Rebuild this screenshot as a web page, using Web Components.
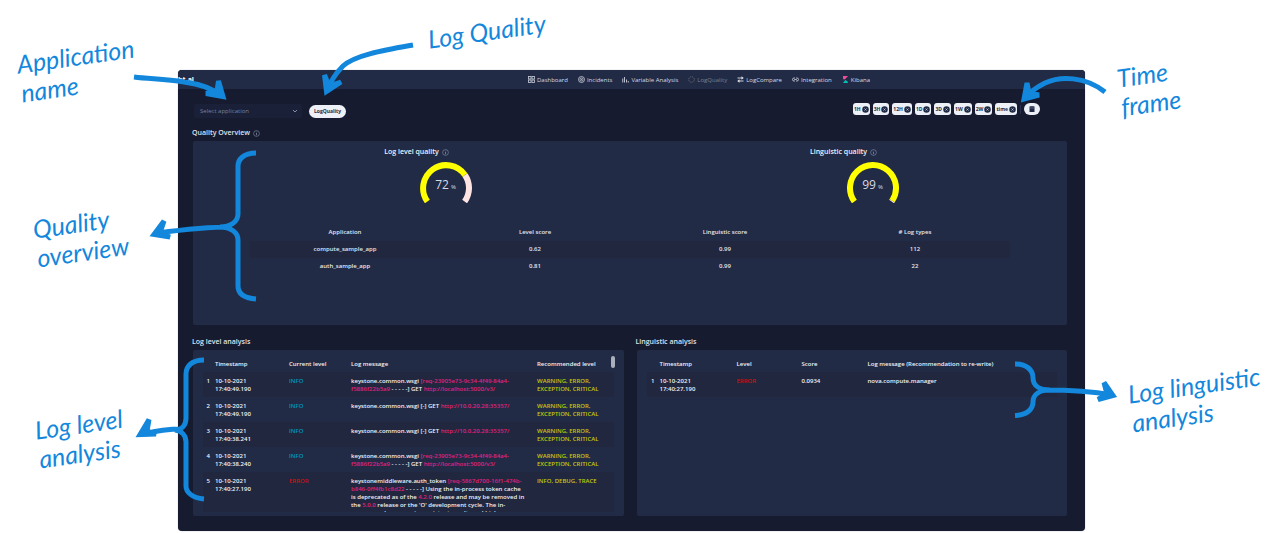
<!DOCTYPE html>
<html lang="en">
<head>
<meta charset="utf-8">
<title>Log quality guide</title>
<style>
  body { margin: 0; background: #fff; font-family: "Open Sans", "Noto Sans", sans-serif; }
</style>
</head>
<body>
<guide-stage></guide-stage>

<script>
const define = (name, html, setup) => {
  const tpl = document.createElement('template');
  tpl.innerHTML = html;
  customElements.define(name, class extends HTMLElement {
    constructor() {
      super();
      this.attachShadow({ mode: 'open' }).append(tpl.content.cloneNode(true));
    }
    connectedCallback() { if (setup) setup(this, this.shadowRoot); }
  });
};

const icons = {
  dashboard: '<g fill="none" stroke="#c9cfdd" stroke-width="1.6"><rect x="1" y="1" width="5" height="5"/><rect x="8" y="1" width="5" height="5"/><rect x="1" y="8" width="5" height="5"/><rect x="8" y="8" width="5" height="5"/></g>',
  incidents: '<g fill="none" stroke="#c9cfdd" stroke-width="1.6"><circle cx="7" cy="7" r="6"/><circle cx="7" cy="7" r="3"/></g><circle cx="7" cy="7" r="1" fill="#c9cfdd"/>',
  variable: '<path d="M1.5 13V5M5 13V2M9 13V7M12.5 13V10" stroke="#c9cfdd" stroke-width="1.8" fill="none"/>',
  quality: '<circle cx="7" cy="7" r="5.6" fill="none" stroke="#6d7280" stroke-width="1.6" stroke-dasharray="2.6 1.8"/>',
  compare: '<path d="M1 4h9M4 10h9" stroke="#e4e7ef" stroke-width="1.8"/><path d="M9 0.5 13.5 4 9 7.5zM5 6.5 0.5 10 5 13.5z" fill="#e4e7ef"/>',
  integration: '<path d="M6 4H4a3 3 0 0 0 0 6h2M8 4h2a3 3 0 0 1 0 6H8M4.500 7h5" fill="none" stroke="#c9cfdd" stroke-width="1.7"/>',
  kibana: '<path d="M2 0h10L2 11z" fill="#f04e98"/><path d="M2 6q4 0 6 3l-6 5z" fill="#2b3350"/><path d="M7 8q5 2 5 6H2z" fill="#00bfb3"/>'
};

define('info-icon', `
  <style>:host { display: inline-block; line-height: 0; } svg { width: 7px; height: 7px; display: block; }</style>
  <svg viewBox="0 0 14 14" aria-hidden="true"><circle cx="7" cy="7" r="5.800" fill="none" stroke="#8f9bb3" stroke-width="1.100"/><path d="M7 6v4.500M7 3.500v1.200" stroke="#8f9bb3" stroke-width="1.400"/></svg>`);

define('nav-link', `
  <style>
    :host { display: block; }
    a { display: flex; align-items: center; gap: 2px; color: #d5dae6; text-decoration: none; font-size: 6px; line-height: 8px; font-weight: 400; white-space: nowrap; }
    :host([active]) a { color: #7b808d; }
    svg { width: 7px; height: 7px; }
  </style>
  <a href="#"><svg viewBox="0 0 14 14" aria-hidden="true"></svg><slot></slot></a>`,
  (el, root) => { root.querySelector('svg').innerHTML = icons[el.getAttribute('icon')]; });

define('top-bar', `
  <style>
    :host { display: flex; justify-content: space-between; align-items: center; height: 19px; background: #222b45; padding-right: 215px; }
    b { color: #fff; font-size: 7px; line-height: 10px; }
    nav { display: flex; gap: 10px; }
  </style>
  <b>ht.ai</b>
  <nav>
    <nav-link icon="dashboard">Dashboard</nav-link>
    <nav-link icon="incidents">Incidents</nav-link>
    <nav-link icon="variable">Variable Analysis</nav-link>
    <nav-link icon="quality" active>LogQuality</nav-link>
    <nav-link icon="compare">LogCompare</nav-link>
    <nav-link icon="integration">Integration</nav-link>
    <nav-link icon="kibana">Kibana</nav-link>
  </nav>`);

define('range-chip', `
  <style>
    :host { display: block; }
    button { display: flex; align-items: center; gap: 1px; height: 12px; padding: 0 1px; border: 0; border-radius: 3px; background: #edf1f7; color: #222b45; font: 700 5px/8px "Open Sans", sans-serif; }
    svg { width: 7px; height: 7px; }
  </style>
  <button type="button"><slot></slot><svg viewBox="0 0 14 14" aria-hidden="true"><circle cx="7" cy="7" r="6.500" fill="#222b45"/><path d="M5 5l4 4M9 5l-4 4" stroke="#c5cbd8" stroke-width="1.600"/></svg></button>`);

define('tool-bar', `
  <style>
    :host { display: flex; align-items: flex-start; padding: 0 27px 0 2px; }
    .pick { position: relative; width: 108px; margin-right: 7px; }
    select { appearance: none; display: block; width: 100%; height: 14px; margin: 0; padding: 0 6px; border: 0; border-radius: 2px; background: #1a2038; color: #7682a0; font: 400 6px/14px "Open Sans", sans-serif; }
    .pick svg { position: absolute; right: 4px; top: 4px; width: 6px; height: 6px; }
    .main { height: 13px; margin-top: 1px; padding: 0 5px; border: 0; border-radius: 7px; background: #edf1f7; color: #222b45; font: 700 5px/13px "Open Sans", sans-serif; }
    .range { display: flex; gap: 3px; margin-left: auto; margin-top: -1px; align-items: center; }
    i { width: 1px; height: 9px; background: #2a3150; }
    .cal { display: grid; place-items: center; width: 16px; height: 12px; padding: 0; border: 0; border-radius: 6px; background: #edf1f7; }
    .cal svg { width: 6px; height: 6px; }
  </style>
  <div class="pick">
    <select aria-label="Application"><option>Select application</option></select>
    <svg viewBox="0 0 12 12" aria-hidden="true"><path d="M2 4l4 4 4-4" fill="none" stroke="#8f9bb3" stroke-width="1.800"/></svg>
  </div>
  <button class="main" type="button">LogQuality</button>
  <div class="range">
    <range-chip>1H</range-chip><range-chip>3H</range-chip><range-chip>12H</range-chip><range-chip>1D</range-chip><range-chip>3D</range-chip><range-chip>1W</range-chip><range-chip>2W</range-chip><range-chip>time</range-chip>
    <i></i>
    <button class="cal" type="button" aria-label="Pick dates"><svg viewBox="0 0 12 12"><path d="M3 0h2v1h2V0h2v1h2v11H1V1h2z" fill="#222b45"/><path d="M2 4h8" stroke="#8f9bb3"/></svg></button>
  </div>`);

define('panel-section', `
  <style>
    :host { display: flex; flex-direction: column; min-width: 0; }
    h2 { display: flex; align-items: center; gap: 3px; margin: 0; color: #dfe3ec; font-size: 7px; line-height: 10px; font-weight: 600; }
    .card { flex: 1; margin: 3px 0 0 1px; background: #222b45; border-radius: 2px; }
  </style>
  <h2><slot name="title"></slot></h2>
  <div class="card"><slot></slot></div>`);

define('score-gauge', `
  <style>
    :host { display: flex; flex-direction: column; align-items: center; }
    h3 { display: flex; align-items: center; gap: 3px; margin: 0; color: #f0f2f7; font-size: 7px; line-height: 10px; font-weight: 600; }
    .dial { position: relative; width: 54px; height: 42px; margin: 4px 0 0 58px; }
    svg { display: block; width: 54px; height: 42px; }
    p { position: absolute; inset: 17px 0 auto 0; margin: 0; text-align: center; color: #d5dae6; font-size: 12px; line-height: 14px; }
    small { font-size: 6px; margin-left: 2px; }
  </style>
  <h3><slot></slot><info-icon></info-icon></h3>
  <div class="dial">
    <svg viewBox="0 0 54 42" aria-hidden="true">
      <g fill="none" stroke-width="6"><path class="rest" stroke="#ffe4e4"/><path class="fill" stroke="#ff0"/></g>
    </svg>
    <p><span></span><small>%</small></p>
  </div>`,
  (el, root) => {
    const value = +el.getAttribute('value');
    const from = -216 * Math.PI / 180, sweep = 252 * Math.PI / 180;
    const pt = a => (27 + 23 * Math.cos(a)).toFixed(2) + ' ' + (27 + 23 * Math.sin(a)).toFixed(2);
    const arc = (a, b) => `M${pt(a)}A23 23 0 ${b - a > Math.PI ? 1 : 0} 1 ${pt(b)}`;
    const mid = from + sweep * value / 100;
    root.querySelector('.rest').setAttribute('d', arc(mid, from + sweep));
    root.querySelector('.fill').setAttribute('d', arc(from, mid));
    root.querySelector('span').textContent = value;
  });

define('app-scores', `
  <style>
    :host { display: block; }
    table { width: 100%; table-layout: fixed; border-collapse: collapse; text-align: center; color: #e4e7ef; font-size: 6px; line-height: 9px; font-weight: 600; }
    th, td { padding: 4px 0; font-weight: 600; }
    tbody tr:nth-child(odd) { background: #20273f; }
  </style>
  <table>
    <thead><tr><th>Application</th><th>Level score</th><th>Linguistic score</th><th># Log types</th></tr></thead>
    <tbody>
      <tr><td>compute_sample_app</td><td>0.62</td><td>0.99</td><td>112</td></tr>
      <tr><td>auth_sample_app</td><td>0.81</td><td>0.99</td><td>22</td></tr>
    </tbody>
  </table>`);

const logTableStyle = `
  <style>
    :host { display: block; position: relative; padding: 6px 10px 4px; }
    .view { max-height: 156px; overflow: hidden; }
    table { width: 100%; table-layout: fixed; border-collapse: collapse; color: #f0f2f7; font-size: 6px; line-height: 8px; font-weight: 600; text-align: left; }
    th { padding: 4px 0; font-weight: 600; }
    td { padding: 5px 0 4px; vertical-align: top; }
    td:first-child { text-align: right; padding-right: 5px; }
    tbody tr:nth-child(odd) { background: #20273f; }
    .info { color: #0095c8; } .error { color: #d40d12; } .rec { color: #c3c90a; }
    em { font-style: normal; color: #e0217c; }
    .thumb { position: absolute; top: 6px; right: 9px; width: 4px; height: 12px; border-radius: 2px; background: #a9afbd; }
  </style>`;
const req = 'keystone.common.wsgi <em>[req-23905e73-9c34-4f49-84a4-f5886f22b5a9</em> - - - - -] GET <em>http://localhost:5000/v3/</em>';
const get = 'keystone.common.wsgi [-] GET <em>http://10.0.20.28:35357/</em>';
const all = 'WARNING, ERROR,<br>EXCEPTION, CRITICAL';
const levelRows = [
  ['17:40:49.190', 'INFO', req, all],
  ['17:40:49.190', 'INFO', get, all],
  ['17:40:38.241', 'INFO', get, all],
  ['17:40:38.240', 'INFO', req, all],
  ['17:40:27.190', 'ERROR', "keystonemiddleware.auth_token <em>[req-5867d700-16f1-474b-b846-0ff4fb1c8d22</em> - - - - -] Using the in-process token cache is deprecated as of the <em>4.2.0</em> release and may be removed in the <em>5.0.0</em> release or the 'O' development cycle. The in-process cache causes inconsistent results and high", 'INFO, DEBUG, TRACE']
];
define('level-log', logTableStyle + `
  <div class="view"><table>
    <colgroup><col style="width:12px"><col style="width:74px"><col style="width:62px"><col style="width:186px"><col style="width:77px"></colgroup>
    <thead><tr><th></th><th>Timestamp</th><th>Current level</th><th>Log message</th><th>Recommended level</th></tr></thead>
    <tbody>${levelRows.map((r, i) => `<tr><td>${i + 1}</td><td>10-10-2021<br>${r[0]}</td><td class="${r[1].toLowerCase()}">${r[1]}</td><td style="padding-right:11px">${r[2]}</td><td class="rec">${r[3]}</td></tr>`).join('')}</tbody>
  </table></div>
  <div class="thumb"></div>`);

define('linguistic-log', logTableStyle + `
  <div class="view"><table>
    <colgroup><col style="width:13px"><col style="width:77px"><col style="width:65px"><col style="width:66px"><col style="width:190px"></colgroup>
    <thead><tr><th></th><th>Timestamp</th><th>Level</th><th>Score</th><th>Log message (Recommendation to re-write)</th></tr></thead>
    <tbody><tr><td>1</td><td>10-10-2021<br>17:40:27.190</td><td class="error">ERROR</td><td>0.0934</td><td>nova.compute.manager</td></tr></tbody>
  </table></div>`);

define('app-window', `
  <style>
    :host { display: block; background: #161b30; border-radius: 4px; overflow: hidden; box-shadow: 0 0 1px #777b90; }
    main { padding: 15px 18px 15px 14px; }
    .overview { margin-top: 10px; }
    .inner { padding: 6px 10px 50px; }
    .gauges { display: grid; grid-template-columns: 1fr 1fr; }
    app-scores { margin: 21px 47px 0; }
    .pair { display: grid; grid-template-columns: 1fr 1fr; gap: 12px; margin-top: 12px; }
  </style>
  <top-bar></top-bar>
  <main>
    <tool-bar></tool-bar>
    <panel-section class="overview">
      <span slot="title">Quality Overview</span><info-icon slot="title"></info-icon>
      <div class="inner">
        <div class="gauges">
          <score-gauge value="72">Log level quality</score-gauge>
          <score-gauge value="99">Linguistic quality</score-gauge>
        </div>
        <app-scores></app-scores>
      </div>
    </panel-section>
    <div class="pair">
      <panel-section><span slot="title">Log level analysis</span><level-log></level-log></panel-section>
      <panel-section><span slot="title">Linguistic analysis</span><linguistic-log></linguistic-log></panel-section>
    </div>
  </main>`);

/* Handwritten-style note laid over the free margin of the stage. */
define('margin-note', `
  <style>
    :host { position: absolute; color: #1387dc; font: italic 400 25px/29px Lato, sans-serif; white-space: nowrap; transform: rotate(-8deg); transform-origin: 0 0; }
  </style><slot></slot>`);

define('guide-stage', `
  <style>
    :host { display: block; position: relative; padding: 70px 200px 1px 178px; overflow: hidden; }
    svg { position: absolute; top: 0; width: 560px; height: 533px; fill: none; stroke: #1387dc; stroke-width: 5; pointer-events: none; }
    .l { left: 0; } .r { right: 0; width: 285px; }
    .tip { stroke-linecap: round; stroke-linejoin: miter; fill: #1387dc; }
  </style>
  <app-window></app-window>
  <svg class="l" viewBox="0 0 560 533" aria-hidden="true">
    <path d="M134 77C150 79 165 79 184 82C200 84 212 88 222 96"/>
    <path class="tip" d="M218.500 81 223 96.500 206 93.500 217 91z"/>
    <path d="M413 45C385 50 355 55 343 66C335 74 330 82 327 92"/>
    <path class="tip" d="M324.500 75 326.500 91.500 341 82 329 86z"/>
    <path d="M256 153C243 153 238 160 238 166V214C238 222 230 227 220 227M256 299C243 298 238 293 238 286V240C238 232 230 227 220 227M232 227C205 227 180 230 158 233"/>
    <path class="tip" d="M164 221 154 234.500 170 237 160 233z"/>
    <path d="M204 360C192 360 186 366 186 374V418C186 425 182 430 175 430M204 499C192 498 186 492 186 486V442C186 436 182 431 175 430M183 429C170 429 155 431 145 434"/>
    <path class="tip" d="M149 419.500 140 434.500 156 434 147 431z"/>
  </svg>
  <svg class="r" viewBox="1000 0 285 533" aria-hidden="true">
    <path d="M1105 92C1085 76 1060 76 1045 83C1035 88 1028 94 1024 99"/>
    <path class="tip" d="M1027 83 1024 99 1039 95 1029 93z"/>
    <path d="M1015 364C1027 364 1033 370 1033 378C1033 386 1040 390 1050 390M1015 415.500C1027 415 1033 409 1033 402C1033 394 1040 390 1050 390M1045 390C1070 390 1090 391 1112 395"/>
    <path class="tip" d="M1104 382.500 1113 395.500 1098 399.500 1107 394z"/>
  </svg>
  <margin-note style="left:15px;top:50px">Application<br>name</margin-note>
  <margin-note style="left:426px;top:25px">Log Quality</margin-note>
  <margin-note style="left:31px;top:215px">Quality<br>overview</margin-note>
  <margin-note style="left:33px;top:416px">Log level<br>analysis</margin-note>
  <margin-note style="right:110px;top:64px">Time<br>frame</margin-note>
  <margin-note style="right:26px;top:380px">Log linguistic<br>analysis</margin-note>`);
</script>
</body>
</html>
